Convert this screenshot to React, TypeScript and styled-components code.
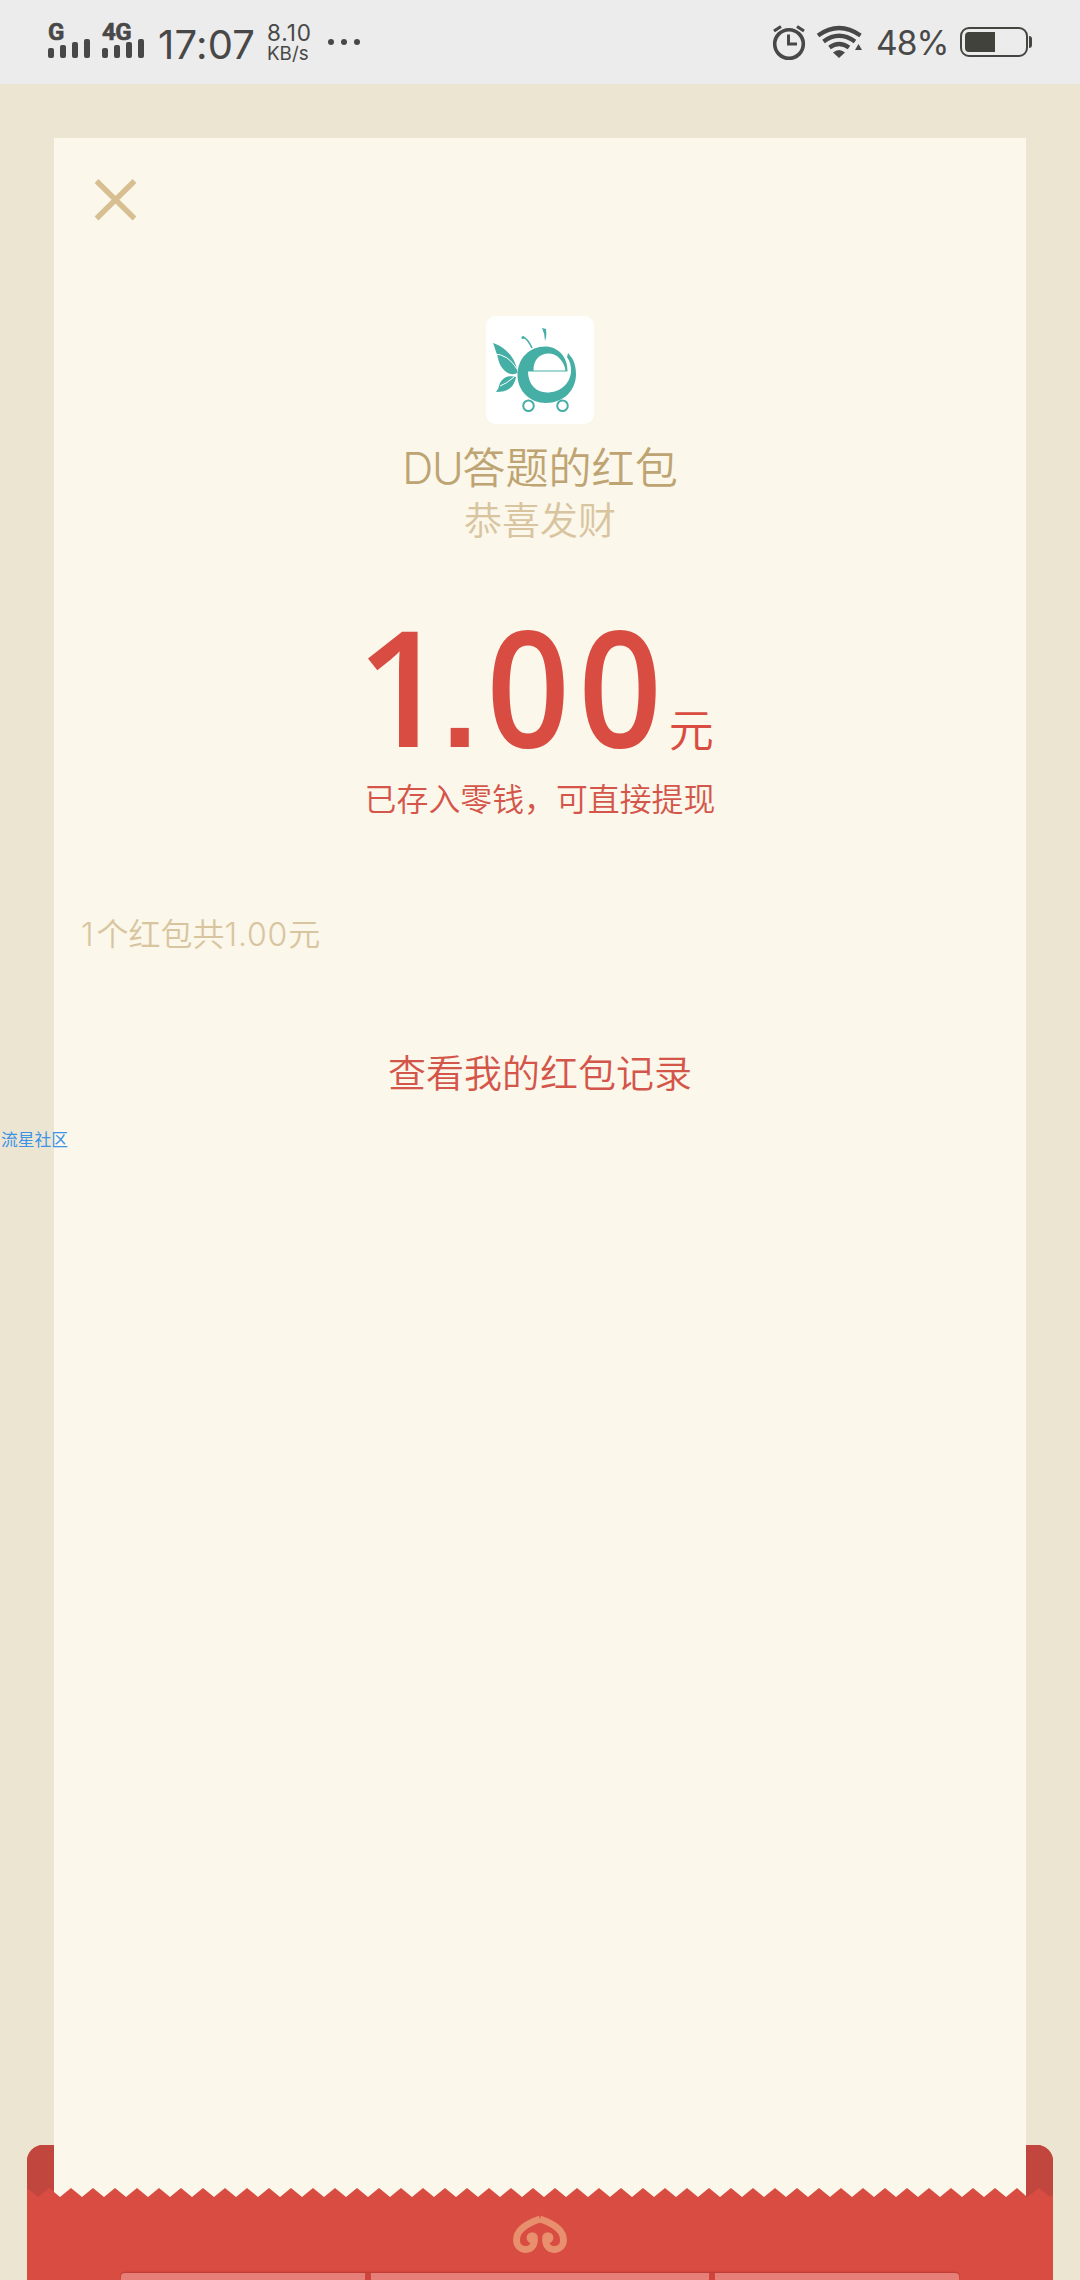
import React from "react";
import styled, { createGlobalStyle } from "styled-components";

const GlobalStyle = createGlobalStyle`
  *, *::before, *::after { box-sizing: border-box; }
  body { margin: 0; background: #ece5d2; }
`;

const cjk = `"Noto Sans CJK SC", sans-serif`;

const Screen = styled.div`
  position: relative;
  display: flex;
  flex-direction: column;
  width: 1080px;
  height: 2280px;
  overflow: hidden;
  background: #ece5d2;
  font-family: ${cjk};
`;

const StatusBar = styled.header`
  display: flex;
  justify-content: space-between;
  flex: none;
  height: 84px;
  padding: 0 48px;
  background: #ececec;
  color: #484848;
  font-family: Inter, sans-serif;
`;

const StatusGroup = styled.div`
  display: flex;
  align-items: flex-start;
`;

const Signal = styled.div`
  display: flex;
  flex-direction: column;
  width: 42px;
  margin: 22px 12px 0 0;
`;

const Network = styled.span`
  height: 17px;
  font: 700 24px/20px Roboto, sans-serif;
  letter-spacing: -0.5px;
  -webkit-text-stroke: 0.6px #484848;
`;

const Bars = styled.div`
  display: flex;
  align-items: flex-end;
  gap: 6px;
`;

const Bar = styled.i<{ $h: number }>`
  width: 6px;
  height: ${(p) => p.$h}px;
  border-radius: 2px;
  background: #484848;
`;

const Clock = styled.span`
  margin: 21px 0 0 2px;
  width: 109px;
  font-size: 40px;
  line-height: 48px;
  letter-spacing: 0.2px;
`;

const Speed = styled.div`
  display: flex;
  flex-direction: column;
  width: 61px;
  padding-top: 21px;
`;

const SpeedText = styled.span<{ $size: number; $line: number }>`
  font-size: ${(p) => p.$size}px;
  line-height: ${(p) => p.$line}px;
  letter-spacing: ${(p) => (p.$size > 20 ? 0.9 : 0)}px;
`;

const Dots = styled.div`
  display: flex;
  gap: 7px;
  margin-top: 39px;
`;

const Dot = styled.i`
  width: 6px;
  height: 6px;
  border-radius: 50%;
  background: #484848;
`;

const StatusIcons = styled.svg`
  flex: none;
`;

const Percent = styled.span`
  width: 84px;
  margin-top: 23px;
  font: 400 33.5px/40px Inter, sans-serif;
  letter-spacing: -0.9px;
`;

const Battery = styled.div`
  display: flex;
  align-items: center;
  gap: 1px;
  margin-top: 27px;
  height: 30px;
`;

const BatteryShell = styled.div`
  width: 68px;
  height: 30px;
  padding: 3px;
  border: 2px solid #454542;
  border-radius: 9px;
`;

const BatteryLevel = styled.div`
  width: 30px;
  height: 20px;
  border-radius: 4px 0 0 4px;
  background: #41423c;
`;

const BatteryTip = styled.i`
  width: 3px;
  height: 12px;
  border-radius: 0 3px 3px 0;
  background: #454542;
`;

const Stage = styled.main`
  display: flex;
  flex-direction: column;
  padding: 54px 27px 0;
`;

const Card = styled.section`
  display: flex;
  flex-direction: column;
  align-items: center;
  height: 2007px;
  margin: 0 27px;
  background: #fbf7ea;
`;

const CloseButton = styled.button`
  align-self: flex-start;
  width: 44px;
  height: 44px;
  margin: 39px 0 0 39px;
  padding: 0;
  border: 0;
  background: none;
  svg { display: block; }
`;

const Avatar = styled.div`
  width: 108px;
  height: 108px;
  margin-top: 95px;
  border-radius: 10px;
  background: #fff;
  overflow: hidden;
  svg { display: block; }
`;

const Line = styled.p<{ $size: number; $line: number; $top: number; $color: string }>`
  margin: ${(p) => p.$top}px 0 0;
  font-size: ${(p) => p.$size}px;
  line-height: ${(p) => p.$line}px;
  font-weight: 350;
  color: ${(p) => p.$color};
  white-space: nowrap;
`;

const Latin = styled.span<{ $spacing: number }>`
  font-family: Inter, sans-serif;
  font-weight: 350;
  line-height: 0;
  letter-spacing: ${(p) => p.$spacing}px;
`;

const Summary = styled(Line)`
  align-self: flex-start;
  padding-left: 27px;
`;

const Amount = styled.div`
  display: flex;
  align-items: baseline;
  align-self: flex-start;
  height: 180px;
  margin-top: 53px;
  padding-left: 302px;
  color: #d94c42;
`;

const Value = styled.span`
  font: 600 161px/180px "Open Sans", sans-serif;
`;

const Point = styled.span`
  font: 700 128px/0 "Liberation Sans", sans-serif;
  margin: 0 4px 0 -6px;
`;

const Zero = styled.span`
  display: inline-block;
  transform: scaleX(0.91);
`;

const Unit = styled.span`
  margin-left: 3px;
  font-size: 45px;
  line-height: 60px;
  font-weight: 350;
`;

const Envelope = styled.footer`
  display: flex;
  flex-direction: column;
  align-items: center;
  height: 135px;
  border-radius: 16px 16px 0 0;
  background: #d94c42;
  overflow: hidden;
`;

const Edge = styled.svg`
  display: block;
  flex: none;
`;

const Ornament = styled.svg`
  flex: none;
  margin-top: 17px;
`;

const Panels = styled.div`
  display: flex;
  gap: 6px;
  width: 838px;
  height: 7px;
  margin-top: 20px;
  border-radius: 4px 4px 0 0;
  box-shadow: 0 -1px 2px #b83a33;
  background: #cf443b;
  overflow: hidden;
`;

const Panel = styled.div<{ $w: number }>`
  width: ${(p) => p.$w}px;
  background: #e67f77;
`;

const Watermark = styled.span`
  position: absolute;
  left: 1px;
  top: 1127px;
  font-size: 16.8px;
  line-height: 24px;
  color: #3d93e6;
`;

const SignalBlock = ({ label }: { label: string }) => (
  <Signal>
    <Network>{label}</Network>
    <Bars>
      {[10, 13, 16, 19].map((h) => (
        <Bar key={h} $h={h} />
      ))}
    </Bars>
  </Signal>
);

const teeth = Array.from({ length: 44 }, (_, i) => {
  const x = 990 - i * 22;
  return `L${x} 43L${x - 11} 52`;
}).join("");

const Curl = () => (
  <>
    <path
      d="M27 4C15 8 3.500 15 3.500 25C3.500 31 8 34.500 13 34.500C18.500 34.500 21.500 30 21.500 24"
      fill="none"
      stroke="#e88f6e"
      strokeWidth="6.800"
      strokeLinejoin="round"
    />
    <circle cx="19.200" cy="22.800" r="5.600" fill="#e88f6e" />
  </>
);

export default function App() {
  return (
    <Screen>
      <GlobalStyle />
      <StatusBar>
        <StatusGroup>
          <SignalBlock label="G" />
          <SignalBlock label="4G" />
          <Clock>17:07</Clock>
          <Speed>
            <SpeedText $size={22.5} $line={24}>8.10</SpeedText>
            <SpeedText $size={18.8} $line={17}>KB/s</SpeedText>
          </Speed>
          <Dots><Dot /><Dot /><Dot /></Dots>
        </StatusGroup>
        <StatusGroup>
          <StatusIcons width="104" height="84" viewBox="772 0 104 84" fill="none" stroke="#484848">
            <circle cx="789" cy="44" r="14.300" strokeWidth="3.600" />
            <path d="M788.500 34.500V44H797" strokeWidth="3" />
            <path d="M774 31L781 26.500M797 26.500L804 31" strokeWidth="3.200" />
            <path d="M818 35.500Q839 20.500 860.500 35.500M823.500 41.500Q839 30 855 41.500M829.500 47.500Q839 40.500 849 47.500" strokeWidth="4.200" />
            <path d="M833 52.500Q839 47.500 845 52.500L839 58Z" fill="#484848" stroke="none" />
            <path d="M855 50L858.500 44L862 50Z" fill="#484848" stroke="none" />
          </StatusIcons>
          <Percent>48%</Percent>
          <Battery>
            <BatteryShell><BatteryLevel /></BatteryShell>
            <BatteryTip />
          </Battery>
        </StatusGroup>
      </StatusBar>

      <Stage>
        <Card>
          <CloseButton aria-label="关闭">
            <svg width="44" height="44" viewBox="0 0 44 44" stroke="#d8bf92" strokeWidth="5.400">
              <path d="M3.500 4L41.500 41.500M41.500 4L3.500 41.500" />
            </svg>
          </CloseButton>
          <Avatar>
            <svg width="108" height="108" viewBox="486 316 108 108">
              <g fill="#46afa5">
                <path d="M568 353L572 358C574.500 362 576 368 576 374C576 391 563 403 546 403C530 403 517.500 391 517.500 375C517.500 358 530 346.500 545 346.500C558 346.500 568 357 567.500 371.500H528C528 384 536 392.500 547 392.500C560 392.500 570 384 571 372C571.300 366 570 361 567 357Z" />
                <path d="M493 343C503 346 516 356 517.500 373C510 377 500 370 498 358C496 352 495 348 493 343Z" />
                <path d="M516 377C507 374.500 500 379 498.500 388L496 392C507 392 514 388 516 377Z" />
                <path d="M542 328L546 329Q547 336 545 341Q545 334 542 328Z" />
              </g>
              <path d="M533.500 370.500C533 360 540 353.500 548.500 353.500C557 353.500 564 361 565.500 370.500Z" fill="#fff" />
              <path d="M494 354Q508 354 517 369M500 386Q506 384 514 377" fill="none" stroke="#fff" strokeWidth="1" />
              <path d="M523 337Q528 339 532 348" fill="none" stroke="#46afa5" strokeWidth="1.500" />
              <circle cx="523" cy="337.500" r="1.500" fill="#46afa5" />
              <circle cx="528.500" cy="405.700" r="5.300" fill="#fff" stroke="#46afa5" strokeWidth="2" />
              <circle cx="562.500" cy="405.700" r="5.300" fill="#fff" stroke="#46afa5" strokeWidth="2" />
            </svg>
          </Avatar>
          <Line $size={43.1} $line={56} $top={13} $color="#bea473"><Latin $spacing={-1.3}>DU</Latin>答题的红包</Line>
          <Line $size={38} $line={48} $top={1} $color="#d8c5a0">恭喜发财</Line>
          <Amount>
            <Value>1<Point>.</Point><Zero>0</Zero><Zero>0</Zero></Value>
            <Unit>元</Unit>
          </Amount>
          <Line $size={31.9} $line={44} $top={0} $color="#d4554a">已存入零钱，可直接提现</Line>
          <Summary $size={32} $line={44} $top={91} $color="#d8c5a0">
            <Latin $spacing={3}>1</Latin>个红包共<Latin $spacing={0.8}>1.00</Latin>元
          </Summary>
          <Line $size={38} $line={52} $top={91} $color="#d4554a">查看我的红包记录</Line>
        </Card>
        <Envelope>
          <Edge width="1026" height="53" viewBox="0 0 1026 53">
            <path d="M0 0H1026V50L1023 52L1012 43L999 53H28V47L22 43L11 52L0 43Z" fill="#c1463d" />
            <path d="M28 42V53H999V42Z" fill="#d94c42" />
            <path d={`M27 0H999V51${teeth}L27 47Z`} fill="#fbf7ea" />
          </Edge>
          <Ornament width="54" height="38" viewBox="0 0 54 38">
            <Curl />
            <g transform="translate(54 0) scale(-1 1)"><Curl /></g>
          </Ornament>
          <Panels><Panel $w={244} /><Panel $w={338} /><Panel $w={244} /></Panels>
        </Envelope>
      </Stage>
      <Watermark>流星社区</Watermark>
    </Screen>
  );
}
